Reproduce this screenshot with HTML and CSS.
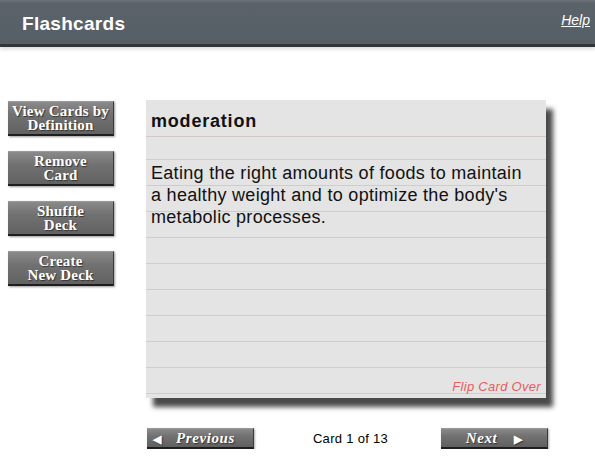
FILE: index.html
```html
<!DOCTYPE html>
<html lang="en">
<head>
	<meta charset="UTF-8">
	<meta name="viewport" content="width=device-width, initial-scale=1.0">
	<title>Flashcards</title>
	<link rel="stylesheet" href="styles.css">
</head>
<body>
	<div class="header">
		<h1>Flashcards</h1>
		<a class="help" href="#">Help</a>
	</div>

	<div class="main">
		<div class="sidebar">
			<button class="side-btn">View Cards by<br>Definition</button>
			<button class="side-btn">Remove<br>Card</button>
			<button class="side-btn">Shuffle<br>Deck</button>
			<button class="side-btn">Create<br>New Deck</button>
		</div>

		<div class="deck">
			<div class="card">
				<div class="term">moderation</div>
				<div class="definition">
					<p>Eating the right amounts of foods to maintain a healthy weight and to optimize the body's metabolic processes.</p>
					<a class="flip" href="#">Flip Card Over</a>
				</div>
			</div>

			<div class="nav">
				<button class="nav-btn prev"><span class="arrow">&#9664;</span> Previous</button>
				<span class="count">Card 1 of 13</span>
				<button class="nav-btn next">Next <span class="arrow">&#9654;</span></button>
			</div>
		</div>
	</div>
</body>
</html>
```

FILE: styles.css
```css
body {
	margin: 0;
	background: #fff;
	font-family: "Liberation Sans", Arial, sans-serif;
}

/* Title bar */
.header {
	display: flex;
	align-items: center;
	justify-content: space-between;
	height: 44px;
	padding: 0 5px 0 22px;
	background: linear-gradient(to bottom, #6d757b 0, #5b636a 3px, #575f66 100%);
	border-bottom: 3px solid #30363a;
	box-shadow: 0 2px 4px #d8d8d8;
}

.header h1 {
	margin: 4px 0 0;
	font-size: 19px;
	letter-spacing: 0.3px;
	color: #fff;
}

.help {
	color: #fff;
	font-size: 14px;
	font-style: italic;
	margin-bottom: 4px;
}

.main {
	display: flex;
	margin-top: 53px;
}

/* Left buttons */
.sidebar {
	display: flex;
	flex-direction: column;
	gap: 15px;
	width: 106px;
	padding: 1px 32px 0 8px;
}

.side-btn {
	height: 35px;
	padding: 0 0 1px;
	border: none;
	border-top: 1px solid #9a9a9a;
	border-bottom: 2px solid #1e1e1e;
	border-right: 1px solid #3a3a3a;
	background: linear-gradient(to bottom, #8a8a8a 0, #717171 40%, #626262 100%);
	box-shadow: 1px 1px 2px #999;
	color: #fff;
	font-family: "Liberation Serif", "Times New Roman", serif;
	font-weight: bold;
	font-size: 15px;
	line-height: 14px;
	letter-spacing: 0.2px;
	text-shadow: 1px 1px 1px #333;
}

/* Card */
.deck {
	width: 402px;
}

.card {
	display: flex;
	flex-direction: column;
	width: 400px;
	height: 298px;
	background: #e4e4e4;
	box-shadow: 7px 9px 5px #4a4a4a;
}

.term {
	height: 36px;
	padding: 0 5px;
	border-bottom: 1px solid #d6c6c6;
	font-size: 18px;
	font-weight: bold;
	letter-spacing: 0.8px;
	line-height: 42px;
	color: #111;
}

.definition {
	flex: 1;
	display: flex;
	flex-direction: column;
	padding: 0 5px;
	background-image: repeating-linear-gradient(to bottom, transparent 0, transparent 22px, #bad3dc 22px, #bad3dc 23px, transparent 23px, transparent 26px);
}

.definition p {
	max-width: 378px;
	margin: 25px 0 0;
	font-size: 18px;
	line-height: 22px;
	letter-spacing: 0.3px;
	color: #111;
}

.flip {
	margin-top: auto;
	margin-bottom: 4px;
	align-self: flex-end;
	color: #e85c60;
	font-size: 13px;
	font-style: italic;
	letter-spacing: 0.3px;
	text-decoration: none;
}

/* Previous / next */
.nav {
	display: flex;
	align-items: center;
	justify-content: space-between;
	margin-top: 30px;
	padding-left: 1px;
}

.nav-btn {
	width: 107px;
	height: 21px;
	padding: 0;
	border: none;
	border-top: 1px solid #9a9a9a;
	border-bottom: 2px solid #1e1e1e;
	border-right: 1px solid #3a3a3a;
	background: linear-gradient(to bottom, #8a8a8a 0, #717171 40%, #606060 100%);
	box-shadow: 1px 1px 2px #aaa;
	color: #fff;
	font-family: "Liberation Serif", "Times New Roman", serif;
	font-weight: bold;
	font-style: italic;
	font-size: 15px;
	letter-spacing: 0.6px;
	text-shadow: 1px 1px 1px #333;
}

.prev {
	text-align: left;
	padding-left: 6px;
}

.arrow {
	font-style: normal;
	font-size: 11px;
	margin: 0 10px 0 0;
}

.next .arrow {
	margin: 0 0 0 12px;
}

.count {
	font-size: 13px;
	letter-spacing: 0.3px;
	color: #000;
	margin-left: 6px;
}
```
